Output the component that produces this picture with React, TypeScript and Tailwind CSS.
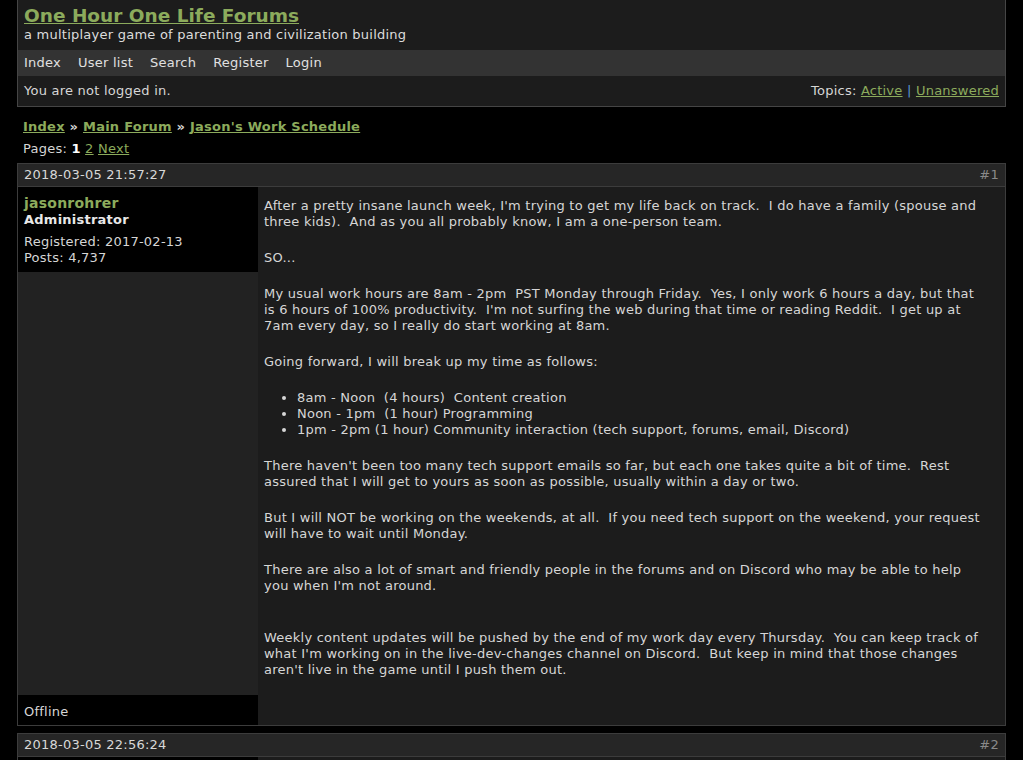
import React from "react";

const green = "text-[#8cab5c]";

type Post = {
  num: number;
  date: string;
};

const paragraphs: string[][] = [
  [
    "After a pretty insane launch week, I'm trying to get my life back on track.  I do have a family (spouse and",
    "three kids).  And as you all probably know, I am a one-person team.",
  ],
  ["SO..."],
  [
    "My usual work hours are 8am - 2pm  PST Monday through Friday.  Yes, I only work 6 hours a day, but that",
    "is 6 hours of 100% productivity.  I'm not surfing the web during that time or reading Reddit.  I get up at",
    "7am every day, so I really do start working at 8am.",
  ],
  ["Going forward, I will break up my time as follows:"],
];

const schedule = [
  "8am - Noon  (4 hours)  Content creation",
  "Noon - 1pm  (1 hour) Programming",
  "1pm - 2pm (1 hour) Community interaction (tech support, forums, email, Discord)",
];

const morePars: string[][] = [
  [
    "There haven't been too many tech support emails so far, but each one takes quite a bit of time.  Rest",
    "assured that I will get to yours as soon as possible, usually within a day or two.",
  ],
  [
    "But I will NOT be working on the weekends, at all.  If you need tech support on the weekend, your request",
    "will have to wait until Monday.",
  ],
  [
    "There are also a lot of smart and friendly people in the forums and on Discord who may be able to help",
    "you when I'm not around.",
  ],
];

const lastPar = [
  "Weekly content updates will be pushed by the end of my work day every Thursday.  You can keep track of",
  "what I'm working on in the live-dev-changes channel on Discord.  But keep in mind that those changes",
  "aren't live in the game until I push them out.",
];

function Par({ lines, className = "" }: { lines: string[]; className?: string }) {
  return (
    <p className={`whitespace-pre mb-[20px] ${className}`}>
      {lines.map((l, i) => (
        <React.Fragment key={i}>
          {l}
          {i < lines.length - 1 && <br />}
        </React.Fragment>
      ))}
    </p>
  );
}

function PostHead({ num, date }: Post) {
  return (
    <div className="flex items-center justify-between bg-[#262626] border border-[#3c3c3c] h-[24px] px-[6px]">
      <span className="text-[#d8d8d8]">{date}</span>
      <span className="text-[#8a8a8a]">#{num}</span>
    </div>
  );
}

export default function App() {
  return (
    <div
      className="min-h-screen bg-black text-[#d6d6d6] text-[13px] leading-[16px] tracking-[0.24px]"
      style={{ fontFamily: '"DejaVu Sans", Verdana, sans-serif' }}
    >
      <div className="mx-[17px]">
        {/* Header box */}
        <div className="bg-[#1c1c1c] border border-t-0 border-[#454545]">
          <div className="px-[6px] pt-[5px] pb-[7px]">
            <h1 className="text-[18.5px] leading-[22px] font-bold tracking-normal">
              <a href="#" className={`${green} underline`}>
                One Hour One Life Forums
              </a>
            </h1>
            <div className="text-[#dcdcdc]">
              a multiplayer game of parenting and civilization building
            </div>
          </div>
          <div className="bg-[#333333] h-[26px] flex items-center gap-[17px] px-[6px] text-[#e0e0e0]">
            <span>Index</span>
            <span>User list</span>
            <span>Search</span>
            <span>Register</span>
            <span>Login</span>
          </div>
          <div className="flex items-center justify-between h-[30px] px-[6px]">
            <span>You are not logged in.</span>
            <span>
              Topics:{" "}
              <a href="#" className={`${green} underline`}>
                Active
              </a>{" "}
              <span className="text-[#5a9bd4]">|</span>{" "}
              <a href="#" className={`${green} underline`}>
                Unanswered
              </a>
            </span>
          </div>
        </div>

        {/* Breadcrumbs */}
        <div className="pt-[12px] px-[6px] font-bold">
          <a href="#" className={`${green} underline`}>Index</a>
          <span className="text-[#d6d6d6]"> » </span>
          <a href="#" className={`${green} underline`}>Main Forum</a>
          <span className="text-[#d6d6d6]"> » </span>
          <a href="#" className={`${green} underline`}>Jason's Work Schedule</a>
        </div>
        <div className="px-[6px] pt-[6px] pb-[6px]">
          Pages: <strong className="text-white">1</strong>{" "}
          <a href="#" className={`${green} underline`}>2</a>{" "}
          <a href="#" className={`${green} underline`}>Next</a>
        </div>

        {/* Post #1 */}
        <PostHead num={1} date="2018-03-05 21:57:27" />
        <div className="border border-t-0 border-[#3c3c3c] flex bg-[#1c1c1c]">
          <div className="w-[240px] shrink-0 flex flex-col bg-[#222222]">
            <div className="bg-black px-[6px] pt-[7px] pb-[6px]">
              <div className={`${green} text-[14px] leading-[18px] font-bold`}>jasonrohrer</div>
              <div className="font-bold text-[#e8e8e8]">Administrator</div>
              <div className="mt-[6px]">Registered: 2017-02-13</div>
              <div>Posts: 4,737</div>
            </div>
            <div className="flex-1" />
            <div className="bg-black h-[30px] flex items-center px-[6px] pt-[4px]">Offline</div>
          </div>
          <div className="flex-1 px-[6px] pt-[11px] pb-[27px]">
            {paragraphs.map((p, i) => (
              <Par key={i} lines={p} />
            ))}
            <ul className="list-disc pl-[33px] mb-[20px]">
              {schedule.map((s) => (
                <li key={s} className="whitespace-pre">
                  {s}
                </li>
              ))}
            </ul>
            {morePars.map((p, i) => (
              <Par key={i} lines={p} />
            ))}
            <p className="h-[16px] mb-0" />
            <Par lines={lastPar} className="mb-0" />
          </div>
        </div>

        {/* Post #2 */}
        <div className="mt-[7px]">
          <PostHead num={2} date="2018-03-05 22:56:24" />
          <div className="border border-t-0 border-[#3c3c3c] flex bg-[#1c1c1c] h-[40px]">
            <div className="w-[240px] bg-black" />
          </div>
        </div>
      </div>
    </div>
  );
}
